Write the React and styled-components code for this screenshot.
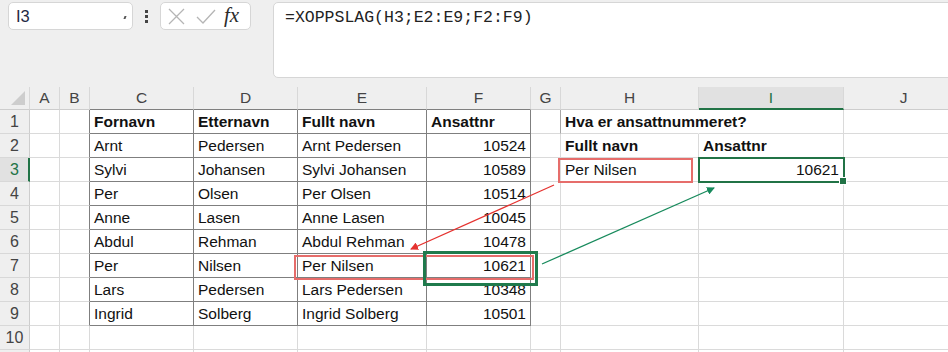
import styled, { createGlobalStyle, css } from "styled-components";

const GlobalStyle = createGlobalStyle`
  html, body {
    margin: 0;
    padding: 0;
    background: #efefef;
  }
  body {
    font-family: "Liberation Sans", Arial, sans-serif;
  }
`;

const COLS = [
  { key: "hdr", w: 30 },
  { key: "A", w: 30 },
  { key: "B", w: 30 },
  { key: "C", w: 104 },
  { key: "D", w: 104 },
  { key: "E", w: 129 },
  { key: "F", w: 104 },
  { key: "G", w: 30 },
  { key: "H", w: 138 },
  { key: "I", w: 145 },
  { key: "J", w: 120 },
];

const TABLE = ["C", "D", "E", "F"];

const ROWS = {
  1: { C: "Fornavn", D: "Etternavn", E: "Fullt navn", F: "Ansattnr", H: "Hva er ansattnummeret?" },
  2: { C: "Arnt", D: "Pedersen", E: "Arnt Pedersen", F: 10524, H: "Fullt navn", I: "Ansattnr" },
  3: { C: "Sylvi", D: "Johansen", E: "Sylvi Johansen", F: 10589, H: "Per Nilsen", I: 10621 },
  4: { C: "Per", D: "Olsen", E: "Per Olsen", F: 10514 },
  5: { C: "Anne", D: "Lasen", E: "Anne Lasen", F: 10045 },
  6: { C: "Abdul", D: "Rehman", E: "Abdul Rehman", F: 10478 },
  7: { C: "Per", D: "Nilsen", E: "Per Nilsen", F: 10621 },
  8: { C: "Lars", D: "Pedersen", E: "Lars Pedersen", F: 10348 },
  9: { C: "Ingrid", D: "Solberg", E: "Ingrid Solberg", F: 10501 },
  10: {},
  11: {},
};

// the last row only peeks in at the bottom edge, its label is not visible
const VISIBLE_ROWS = 10;

const BOLD = { 1: ["C", "D", "E", "F", "H"], 2: ["H", "I"] };

const Page = styled.div`
  position: relative;
  width: 948px;
  height: 352px;
  overflow: hidden;
  background: #efefef;
`;

const Toolbar = styled.div`
  height: 87px;
  box-sizing: border-box;
  padding: 2px 0 0 8px;
  display: flex;
  align-items: flex-start;
`;

const Box = styled.div`
  box-sizing: border-box;
  background: #fff;
  border: 1px solid #d6d6d6;
  border-radius: 5px;
`;

const NameBox = styled(Box)`
  width: 125px;
  height: 28px;
  display: flex;
  align-items: center;
  justify-content: space-between;
  padding: 0 6px 0 7px;
  font-size: 16.5px;
  color: #1f2a44;
`;

const Caret = styled.span`
  width: 2px;
  height: 3px;
  background: #555;
  margin-top: 2px;
  transform: skewX(-20deg);
`;

const Kebab = styled.div`
  width: 27px;
  height: 28px;
  display: flex;
  flex-direction: column;
  align-items: center;
  justify-content: center;
  gap: 2px;
  span {
    width: 3px;
    height: 3px;
    background: #444;
  }
`;

const FxBox = styled(Box)`
  width: 91px;
  height: 28px;
  display: flex;
  align-items: center;
  padding: 0 0 0 7px;
  gap: 11px;
`;

const Fx = styled.span`
  font-family: "Liberation Serif", "DejaVu Serif", serif;
  font-style: italic;
  font-size: 21px;
  line-height: 1;
  color: #2b2b2b;
  margin: -2px 0 0 -3px;
`;

const FormulaBox = styled(Box)`
  flex: 1;
  height: 76px;
  margin: 0 -10px 0 22px;
  padding: 5px 11px;
  font-family: "Liberation Mono", "DejaVu Sans Mono", monospace;
  font-size: 16.5px;
  line-height: 20px;
  color: #222;
`;

const Grid = styled.div`
  display: grid;
  grid-template-columns: ${COLS.map((c) => c.w + "px").join(" ")};
  grid-template-rows: 23px;
  grid-auto-rows: 24px;
  background: #fff;
`;

const HeadCell = styled.div`
  box-sizing: border-box;
  background: ${(p) => (p.$active ? "#e1e1e1" : "#efefef")};
  border-right: 1px solid #d8d8d8;
  border-bottom: ${(p) =>
    p.$active ? "2px solid #217346" : `1px solid ${p.$edge ? "#7f7f7f" : "#cdcdcd"}`};
  display: flex;
  align-items: center;
  justify-content: center;
  font-size: 15.5px;
  color: ${(p) => (p.$active ? "#217346" : "#444")};
  padding-top: ${(p) => (p.$active ? "1px" : "0")};
`;

const Corner = styled(HeadCell)`
  position: relative;
  &::after {
    content: "";
    position: absolute;
    right: 4px;
    bottom: 4px;
    border-style: solid;
    border-width: 0 0 14px 14px;
    border-color: transparent transparent #cdcdcd transparent;
  }
`;

const RowHead = styled.div`
  box-sizing: border-box;
  background: ${(p) => (p.$active ? "#e1e1e1" : "#efefef")};
  border-right: ${(p) => (p.$active ? "2px solid #217346" : "1px solid #cdcdcd")};
  border-bottom: 1px solid #d8d8d8;
  display: flex;
  align-items: center;
  justify-content: center;
  padding-left: ${(p) => (p.$active ? "1px" : "0")};
  font-size: 16px;
  color: ${(p) => (p.$active ? "#217346" : "#444")};
`;

const Cell = styled.div`
  box-sizing: border-box;
  position: relative;
  border-right: 1px solid ${(p) => p.$right || "#dadada"};
  border-bottom: 1px solid ${(p) => p.$bottom || "#dadada"};
  padding: 2px 4px 0;
  font-size: 15.5px;
  line-height: 20px;
  color: #111;
  white-space: nowrap;
  font-weight: ${(p) => (p.$bold ? 700 : 400)};
  text-align: ${(p) => (p.$num ? "right" : "left")};
  ${(p) =>
    p.$selected &&
    css`
      outline: 2px solid #217346;
      outline-offset: -1px;
      z-index: 1;
      &::after {
        content: "";
        position: absolute;
        right: -4px;
        bottom: -4px;
        width: 6px;
        height: 6px;
        background: #217346;
        border: 1px solid #fff;
      }
    `}
`;

const Overlay = styled.svg`
  position: absolute;
  left: 0;
  top: 0;
  pointer-events: none;
  z-index: 2;
`;

function cellBorders(col, row) {
  const inTable = TABLE.includes(col) && row <= 9;
  let right, bottom;
  if (inTable) {
    right = "#7f7f7f";
    bottom = "#7f7f7f";
  }
  if (col === "B" && row <= 9) right = "#7f7f7f";
  if (col === "G" && row === 1) right = "#a6a6a6";
  if (col === "H" && row === 1) right = "transparent";
  return { right, bottom };
}

const App = () => {
  return (
    <Page>
      <GlobalStyle />
      <Toolbar>
        <NameBox>
          <span>I3</span>
          <Caret />
        </NameBox>
        <Kebab>
          <span />
          <span />
          <span />
        </Kebab>
        <FxBox>
          <svg width="17" height="17" viewBox="0 0 17 17">
            <path d="M1 1L16 16M16 1L1 16" stroke="#b5b5b5" strokeWidth="1.3" fill="none" />
          </svg>
          <svg width="20" height="17" viewBox="0 0 20 17">
            <path d="M1 9L7 15L19 2" stroke="#b5b5b5" strokeWidth="1.3" fill="none" />
          </svg>
          <Fx>fx</Fx>
        </FxBox>
        <FormulaBox>=XOPPSLAG(H3;E2:E9;F2:F9)</FormulaBox>
      </Toolbar>

      <Grid>
        {COLS.map((c, i) =>
          i === 0 ? (
            <Corner key={c.key} />
          ) : (
            <HeadCell key={c.key} $active={c.key === "I"} $edge={TABLE.includes(c.key)}>
              {c.key}
            </HeadCell>
          )
        )}
        {Object.keys(ROWS).map((r) => {
          const row = Number(r);
          const data = ROWS[row];
          return COLS.map((c, i) => {
            if (i === 0)
              return (
                <RowHead key={`h${row}`} $active={row === 3}>
                  {row <= VISIBLE_ROWS ? row : null}
                </RowHead>
              );
            const v = data[c.key];
            const { right, bottom } = cellBorders(c.key, row);
            return (
              <Cell
                key={`${c.key}${row}`}
                $right={right}
                $bottom={bottom}
                $num={typeof v === "number"}
                $bold={(BOLD[row] || []).includes(c.key)}
                $selected={c.key === "I" && row === 3}
              >
                {v}
              </Cell>
            );
          });
        })}
      </Grid>

      <Overlay width="948" height="352" viewBox="0 0 948 352">
        <defs>
          <marker id="redHead" markerWidth="8" markerHeight="8" refX="7" refY="4" orient="auto" markerUnits="userSpaceOnUse">
            <path d="M0 0L8 4L0 8Z" fill="#e5322f" />
          </marker>
          <marker id="greenHead" markerWidth="8" markerHeight="8" refX="7" refY="4" orient="auto" markerUnits="userSpaceOnUse">
            <path d="M0 0L8 4L0 8Z" fill="#178a5c" />
          </marker>
        </defs>
        <rect x="559" y="159" width="133" height="23" fill="none" stroke="#e66d6b" strokeWidth="2" />
        <rect x="295" y="256" width="238" height="23" fill="none" stroke="#e66d6b" strokeWidth="2" />
        <rect x="424.5" y="252.5" width="112" height="32" fill="none" stroke="#1f7a4c" strokeWidth="3" />
        <line x1="554" y1="185" x2="411" y2="249" stroke="#e5322f" strokeWidth="1.3" markerEnd="url(#redHead)" />
        <line x1="542" y1="264" x2="714" y2="188" stroke="#178a5c" strokeWidth="1.3" markerEnd="url(#greenHead)" />
      </Overlay>
    </Page>
  );
};

export default App;
